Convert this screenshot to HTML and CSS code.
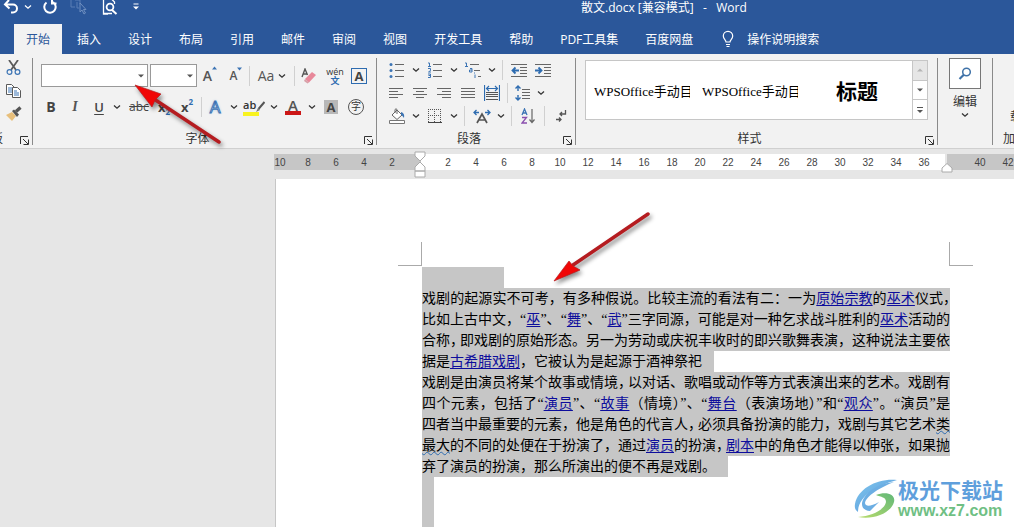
FILE: index.html
```html
<!DOCTYPE html>
<html lang="zh-CN">
<head>
<meta charset="utf-8">
<title>散文.docx - Word</title>
<link rel="stylesheet" href="styles.css">
</head>
<body>
<svg class="defs" aria-hidden="true">
  <symbol id="chev" viewBox="0 0 8 6"><path d="M1 1.500 4 4.200 7 1.500" fill="none" stroke="currentColor" stroke-width="1.300"/></symbol>
  <symbol id="tri" viewBox="0 0 8 6"><path d="M1 1.500h6L4 4.500z" fill="currentColor"/></symbol>
  <symbol id="launch" viewBox="0 0 9 9"><path d="M.5 8V.5H8M3 3l5 5M8.500 3.500v5h-5" fill="none" stroke="#333" stroke-width="1"/></symbol>
</svg>
<div class="app">
  <header class="titlebar">
    <div class="quick">
      <button class="q q-undo" aria-label="撤消"><svg width="16" height="16" viewBox="0 0 16 16"><path d="M6 1 2 5.500 6.500 9.500M2.500 5.500H10a4 4 0 0 1 0 8H8" fill="none" stroke="#fff" stroke-width="2"/></svg></button>
      <button class="q q-small" aria-label="撤消列表"><svg width="8" height="6"><use href="#chev"/></svg></button>
      <button class="q q-redo" aria-label="重复"><svg width="16" height="16" viewBox="0 0 16 16"><path d="M4.500 3.500a5.700 5.700 0 1 0 6.500-.3M10 0v4.500h4.500" fill="none" stroke="#fff" stroke-width="2"/></svg></button>
      <button class="q q-select" aria-label="选择"><svg width="18" height="16" viewBox="0 0 18 16"><path d="M1 1v7h4M5 1h5v4M7 3v6h2" fill="none" stroke="#5b7fb5"/><path d="M10 4v9l2-2 2 4 1.500-1-2-3.500H16z" fill="none" stroke="#6f8fc0"/></svg></button>
      <button class="q q-preview" aria-label="打印预览"><svg width="16" height="16" viewBox="0 0 16 16"><path d="M6 15H1.500V0h8l3 3v2M1.500 14.500H10" fill="none" stroke="#fff" stroke-width="1.300"/><circle cx="8" cy="8" r="3.400" fill="none" stroke="#fff" stroke-width="1.800"/><path d="m10 11 4.500 4" stroke="#fff" stroke-width="2"/></svg></button>
      <button class="q q-more" aria-label="自定义"><svg width="8" height="8" viewBox="0 0 8 8"><path d="M1.500 1h5" stroke="#fff"/><path d="M1 3.500h6L4 6.500z" fill="#fff"/></svg></button>
    </div>
    <div class="doc-title">散文.docx [兼容模式] &nbsp; - &nbsp; Word</div>
  </header>
  <nav class="tabs">
    <button class="tab active">开始</button><button class="tab">插入</button><button class="tab">设计</button><button class="tab">布局</button><button class="tab">引用</button><button class="tab">邮件</button><button class="tab">审阅</button><button class="tab">视图</button><button class="tab">开发工具</button><button class="tab">帮助</button><button class="tab">PDF工具集</button><button class="tab">百度网盘</button>
    <button class="tell"><svg width="12" height="18" viewBox="0 0 12 18"><path d="M4 12c0-2-2.700-3-2.700-6a4.700 4.700 0 0 1 9.400 0c0 3-2.700 4-2.700 6zM4 14.500h4M4.500 16.500h3" fill="none" stroke="#fff" stroke-width="1.200"/></svg>操作说明搜索</button>
  </nav>

  <section class="ribbon">
    <div class="group g-clip">
      <div class="stack">
        <button class="b" aria-label="剪切"><svg width="16" height="16" viewBox="0 0 16 16"><path d="M3 0 10 10M12 0 5 10" stroke="#5a5a5a" stroke-width="1.800"/><circle cx="3.500" cy="12" r="2.400" fill="none" stroke="#3c74b4" stroke-width="1.200"/><circle cx="11.500" cy="12" r="2.400" fill="none" stroke="#3c74b4" stroke-width="1.200"/></svg></button>
        <button class="b" aria-label="复制"><svg width="16" height="16" viewBox="0 0 16 16"><path d="M.5 1.500h5l3 3v7h-8z" fill="#fff" stroke="#5a5a5a"/><path d="M2 5h4M2 7h4M2 9h4" stroke="#3c74b4"/><path d="M6.500 4.500h5l3 3v7h-8z" fill="#fff" stroke="#5a5a5a"/><path d="M8 8h3M8 10h5M8 12h5" stroke="#3c74b4"/></svg></button>
        <button class="b" aria-label="格式刷"><svg width="16" height="16" viewBox="0 0 16 16"><path d="m0 9 6-3 4 4-4 5z" fill="#e8bf7b"/><path d="m6 5 2-1.500 5 5L11 11z" fill="#555"/><path d="m10 5.500 4.500-4" stroke="#555" stroke-width="3.200"/></svg></button>
      </div>
      <div class="foot"><span class="clip-label">剪贴板</span><button class="launch" aria-label="剪贴板设置"><svg width="9" height="9"><use href="#launch"/></svg></button></div>
    </div>

    <div class="group g-font">
      <div class="rows two">
        <div class="row">
          <label class="combo combo-font"><select aria-label="字体"><option></option></select><svg width="8" height="6"><use href="#tri"/></svg></label>
          <label class="combo combo-size"><select aria-label="字号"><option></option></select><svg width="8" height="6"><use href="#tri"/></svg></label>
          <button class="b w26 ic" aria-label="增大字号"><span class="letter">A</span><svg class="up" width="5" height="4" viewBox="0 0 5 4"><path d="M0 3.500h5L2.500.5z" fill="#3c74b4"/></svg></button>
          <button class="b w26 ic" aria-label="减小字号"><span class="letter small">A</span><svg class="up" width="5" height="4" viewBox="0 0 5 4"><path d="M0 .5h5L2.500 3.500z" fill="#3c74b4"/></svg></button>
          <i class="sep"></i>
          <button class="b w44 aa">Aa<svg width="8" height="6"><use href="#chev"/></svg></button>
          <i class="sep"></i>
          <button class="b w28" aria-label="清除格式"><svg width="16" height="16" viewBox="0 0 16 16"><path d="m1 9 3-8 2.500 6M2 6h4" fill="none" stroke="#555" stroke-width="1.400"/><path d="m4 11 7-7 4 3-7 7.500z" fill="#e8889a"/><path d="m4 11 4 3.500-1.500 1L3 13z" fill="#d8a0a8"/></svg></button>
          <button class="b w24 wen"><span>wén</span><span class="blue">文</span></button>
          <button class="b w24"><span class="boxed">A</span></button>
        </div>
        <div class="row">
          <button class="b w24 bold">B</button>
          <button class="b w24 ital">I</button>
          <button class="b w24 under">U</button>
          <button class="b w12" aria-label="下划线样式"><svg width="8" height="6"><use href="#chev"/></svg></button>
          <button class="b w32 strike">abc</button>
          <button class="b w18 script">x<sub>2</sub></button>
          <button class="b w28 script">x<sup>2</sup></button>
          <i class="sep"></i>
          <button class="b w26 effect">A</button>
          <button class="b w12" aria-label="文本效果"><svg width="8" height="6"><use href="#chev"/></svg></button>
          <button class="b w28 mark"><span>ab</span><svg width="10" height="12" viewBox="0 0 10 12"><path d="m9.500 1-6 7" stroke="#555" stroke-width="2"/><path d="M3 7 1 11l4-2z" fill="#777"/></svg></button>
          <button class="b w12" aria-label="突出显示颜色"><svg width="8" height="6"><use href="#chev"/></svg></button>
          <button class="b w26 color">A</button>
          <button class="b w12" aria-label="字体颜色"><svg width="8" height="6"><use href="#chev"/></svg></button>
          <button class="b w26"><span class="shade">A</span></button>
          <button class="b w24"><span class="ring">字</span></button>
        </div>
      </div>
      <div class="foot"><span class="label">字体</span><button class="launch" aria-label="字体设置"><svg width="9" height="9"><use href="#launch"/></svg></button></div>
    </div>

    <div class="group g-para">
      <div class="rows three">
        <div class="row">
          <button class="b w26" aria-label="项目符号"><svg width="16" height="16" viewBox="0 0 16 16"><path d="M6 2.500h9M6 8.500h9M6 14.500h9" stroke="#666"/><g fill="#3c74b4"><circle cx="2" cy="2.500" r="1.500"/><circle cx="2" cy="8.500" r="1.500"/><circle cx="2" cy="14.500" r="1.500"/></g></svg></button>
          <button class="b w12" aria-label="项目符号库"><svg width="8" height="6"><use href="#chev"/></svg></button>
          <button class="b w26" aria-label="编号"><svg width="16" height="16" viewBox="0 0 16 16"><path d="M6 2.500h9M6 8.500h9M6 14.500h9" stroke="#666"/><path d="M1 1h1.500v3.500M1 4.500h3M1 6.500h2.500v2L1.500 10H4M1 12h2.500v3.500H1M1.500 13.500h2" fill="none" stroke="#3c74b4"/></svg></button>
          <button class="b w12" aria-label="编号库"><svg width="8" height="6"><use href="#chev"/></svg></button>
          <button class="b w26" aria-label="多级列表"><svg width="16" height="16" viewBox="0 0 16 16"><path d="M5 2.500h9M9 8.500h6M13 14.500h3" stroke="#666"/><path d="M0 1h1.500v3.500M0 4.500h3M5 6.500h2v3.500H4.500V8H7M9.500 10.500v1M10 12.500v3.500" fill="none" stroke="#3c74b4"/></svg></button>
          <button class="b w12" aria-label="列表库"><svg width="8" height="6"><use href="#chev"/></svg></button>
          <i class="sep wide"></i>
          <button class="b w24" aria-label="减少缩进"><svg width="16" height="16" viewBox="0 0 16 16"><path d="M0 2.500h16M9 5.500h7M9 8.500h7M9 11.500h7M0 14.500h16" stroke="#666"/><path d="M8 8.500H2M4.500 5.500l-3 3 3 3" fill="none" stroke="#2e6cb0" stroke-width="1.800"/></svg></button>
          <button class="b w24" aria-label="增加缩进"><svg width="16" height="16" viewBox="0 0 16 16"><path d="M0 2.500h16M9 5.500h7M9 8.500h7M9 11.500h7M0 14.500h16" stroke="#666"/><path d="M0 8.500h6M3.500 5.500l3 3-3 3" fill="none" stroke="#2e6cb0" stroke-width="1.800"/></svg></button>
        </div>
        <div class="row">
          <button class="b w24" aria-label="左对齐"><svg width="16" height="14" viewBox="0 0 16 14"><path d="M1 2.500h14M1 5.500h9M1 8.500h14M1 11.500h9" stroke="#666"/></svg></button>
          <button class="b w24" aria-label="居中"><svg width="16" height="14" viewBox="0 0 16 14"><path d="M1 2.500h14M4 5.500h8M1 8.500h14M4 11.500h8" stroke="#666"/></svg></button>
          <button class="b w24" aria-label="右对齐"><svg width="16" height="14" viewBox="0 0 16 14"><path d="M1 2.500h14M6 5.500h9M1 8.500h14M6 11.500h9" stroke="#666"/></svg></button>
          <button class="b w24" aria-label="两端对齐"><svg width="16" height="14" viewBox="0 0 16 14"><path d="M1 2.500h14M1 5.500h14M1 8.500h14M1 11.500h14" stroke="#666"/></svg></button>
          <button class="b w24" aria-label="分散对齐"><svg width="16" height="16" viewBox="0 0 16 16"><path d="M.5 0v16M15.500 0v16M3 3.500h10M5 1 2.500 3.500 5 6M11 1l2.500 2.500L11 6" fill="none" stroke="#2e6cb0" stroke-width="1.200"/><path d="M2 7.500h12M2 9.500h12M2 11.500h12M2 14.500h12" stroke="#555"/></svg></button>
          <i class="sep tight"></i>
          <button class="b w24" aria-label="行距"><svg width="16" height="16" viewBox="0 0 16 16"><path d="M7 4.500h8M7 7.500h8M7 10.500h8M7 13.500h8" stroke="#666"/><path d="M3 1v5M3 10v5M.5 3.500 3 1l2.500 2.500M.5 12.500 3 15l2.500-2.500" fill="none" stroke="#2e6cb0" stroke-width="1.400"/></svg></button>
          <button class="b w12" aria-label="行距选项"><svg width="8" height="6"><use href="#chev"/></svg></button>
        </div>
        <div class="row">
          <button class="b w26" aria-label="底纹"><svg width="16" height="16" viewBox="0 0 16 16"><path d="m3 7 5-5 5 5-5 4.500zM6 5V1.500Q7 0 8 1.500V6" fill="#fff" stroke="#666"/><path d="M12 4q4 1 3 6-2-3-3-3z" fill="#3c74b4"/><path d="M.5 12.500h15v3H.5z" fill="#fff" stroke="#777"/></svg></button>
          <button class="b w12" aria-label="底纹颜色"><svg width="8" height="6"><use href="#chev"/></svg></button>
          <button class="b w26" aria-label="边框"><svg width="14" height="14" viewBox="0 0 14 14"><path d="M.5 0v13M6.500 0v13M12.500 0v13M0 .5h13M0 6.500h13" stroke="#555" stroke-dasharray="1 1"/><path d="M0 13.500h14" stroke="#444"/></svg></button>
          <button class="b w12" aria-label="边框样式"><svg width="8" height="6"><use href="#chev"/></svg></button>
          <i class="sep wide"></i>
          <button class="b w26" aria-label="中文版式"><svg width="18" height="16" viewBox="0 0 18 16"><path d="m4 15 5-9 5 9M6 12h6" fill="none" stroke="#555" stroke-width="1.700"/><path d="M1 4.500h5M3.500 2 1 4.500 3.500 7M12 4.500h5M14.500 2 17 4.500 14.500 7" fill="none" stroke="#2e6cb0" stroke-width="1.300"/></svg></button>
          <button class="b w12" aria-label="版式选项"><svg width="8" height="6"><use href="#chev"/></svg></button>
          <i class="sep wide"></i>
          <button class="b w24" aria-label="排序"><svg width="14" height="16" viewBox="0 0 14 16"><path d="m1 7 2.500-6L6 7M2 5h3" fill="none" stroke="#3c74b4" stroke-width="1.300"/><path d="M1 9.500h4.500L1 15h5" fill="none" stroke="#8a4fae" stroke-width="1.300"/><path d="M11 1v13M8.500 11.500 11 14.500l2.500-3" fill="none" stroke="#666" stroke-width="1.200"/></svg></button>
          <i class="sep wide"></i>
          <button class="b w24" aria-label="显示编辑标记"><svg width="12" height="14" viewBox="0 0 12 14"><path d="M10.500 1v4H5M7 3 5 5l2 2M1 10.500h5M4 8.500l2 2-2 2" fill="none" stroke="#555" stroke-width="1.300"/></svg></button>
        </div>
      </div>
      <div class="foot"><span class="label">段落</span><button class="launch" aria-label="段落设置"><svg width="9" height="9"><use href="#launch"/></svg></button></div>
    </div>

    <div class="group g-style">
      <div class="gallery">
        <button class="style">WPSOffice手动目录</button>
        <button class="style">WPSOffice手动目录</button>
        <button class="style heading">标题</button>
        <div class="scroll">
          <button class="off" aria-label="上一行"><svg width="8" height="6" viewBox="0 0 8 6"><path d="M1 4.500h6L4 1.500z" fill="#b5b5b5"/></svg></button>
          <button aria-label="下一行"><svg width="8" height="6"><use href="#tri"/></svg></button>
          <button aria-label="其他"><svg width="8" height="8" viewBox="0 0 8 8"><path d="M1 1.500h6" stroke="#555"/><path d="M1 4h6L4 7z" fill="#555"/></svg></button>
        </div>
      </div>
      <div class="foot"><span class="label">样式</span><button class="launch" aria-label="样式设置"><svg width="9" height="9"><use href="#launch"/></svg></button></div>
    </div>

    <div class="group g-edit">
      <button class="edit"><span class="edit-box"><svg width="14" height="14" viewBox="0 0 14 14"><circle cx="8.500" cy="5" r="3.800" fill="none" stroke="#3f72a8" stroke-width="1.500"/><path d="M5.800 7.800 1.500 12" stroke="#3f72a8" stroke-width="2.200"/></svg></span><span>编辑</span><svg width="8" height="6"><use href="#chev"/></svg></button>
    </div>
    <div class="group g-addin"><button class="addin">载项</button><div class="foot addin-foot">加载项</div></div>
  </section>

  <main class="workspace">
    <div class="ruler">
      <div class="r-left"><span>10</span><span>8</span><span>6</span><span>4</span><span>2</span></div>
      <div class="r-mid"><span>2</span><span>4</span><span>6</span><span>8</span><span>10</span><span>12</span><span>14</span><span>16</span><span>18</span><span>20</span><span>22</span><span>24</span><span>26</span><span>28</span><span>30</span><span>32</span><span>34</span><span>36</span>
        <svg class="indent-left" width="12" height="28" viewBox="0 0 12 28"><path d="M1 1h10v4L6 10 1 5zM1 20v-4l5-5 5 5v4zM1 20h10v6H1z" fill="#fff" stroke="#aaa"/></svg>
        <svg class="indent-right" width="12" height="10" viewBox="0 0 12 10"><path d="M1 9V5l5-4.500L11 5v4z" fill="#fff" stroke="#aaa"/></svg>
      </div>
      <div class="r-right"><span>40</span><span>42</span></div>
    </div>
    <article class="page">
      <div class="corners"><i class="corner c-left"></i><i class="corner c-right"></i></div>
      <div class="sel sel-blank"></div>
      <p class="para">
        <span class="line full">戏剧的起源实不可考，有多种假说。比较主流的看法有二：一为<a href="#">原始宗教</a>的<a href="#">巫术</a>仪式<span class="half">，</span></span>
        <span class="line full">比如上古中文，“<a href="#">巫</a>”、“<a href="#">舞</a>”、“<a href="#">武</a>”三字同源，可能是对一种乞求战斗胜利的<a href="#">巫术</a>活动的</span>
        <span class="line full">合称<span class="tuck">，</span>即戏剧的原始形态。另一为劳动或庆祝丰收时的即兴歌舞表演，这种说法主要依</span>
        <span class="line last">据是<a href="#">古希腊戏剧</a>，它被认为是起源于酒神祭祀</span>
      </p>
      <p class="para">
        <span class="line full">戏剧是由演员将某个故事或情境<span class="tuck">，</span>以对话、歌唱或动作等方式表演出来的艺术。戏剧有</span>
        <span class="line full">四个元素，包括了“<a href="#">演员</a>”、“<a href="#">故事</a>（情境）”、“<a href="#">舞台</a>（表演场地）”和“<a href="#">观众</a>”。“演员”是</span>
        <span class="line full">四者当中最重要的元素，他是角色的代言人<span class="tuck">，</span>必须具备扮演的能力，戏剧与其它艺术<span class="wavy">类</span></span>
        <span class="line full"><span class="wavy">最大</span>的不同的处便在于扮演了，通过<a href="#">演员</a>的扮演<span class="tuck">，</span><a href="#">剧本</a>中的角色才能得以伸张，如果抛</span>
        <span class="line last">弃了演员的扮演，那么所演出的便不再是戏剧。</span>
      </p>
      <div class="sel sel-tail"></div>
    </article>
  </main>

  <svg class="arrow arrow-ribbon" width="100" height="70" viewBox="0 0 100 70"><path d="m24 19 65 43" stroke="#b51c20" stroke-width="3.500" stroke-linecap="round"/><path d="M5 5 31 14 25 20 22 27z" fill="#f00606" stroke="#b51c20" stroke-width=".7"/></svg>
  <svg class="arrow arrow-text" width="110" height="80" viewBox="0 0 110 80"><path d="M99 6 24 57" stroke="#b51c20" stroke-width="3.500" stroke-linecap="round"/><path d="M5 73 20 53 24 58 31 62z" fill="#f00606" stroke="#b51c20" stroke-width=".7"/></svg>

  <div class="watermark">
    <svg width="44" height="40" viewBox="0 0 44 40"><defs><linearGradient id="wa" x2="1" y2="1"><stop stop-color="#7fc8ee"/><stop offset="1" stop-color="#5793d8"/></linearGradient><linearGradient id="wb" x1="1" x2="0" y2="1"><stop stop-color="#62b878"/><stop offset="1" stop-color="#b9dc6c"/></linearGradient></defs><path d="M43 1C24-1 4 9 1 25q-1 6 3 8C4 18 21 7 43 1z" fill="url(#wa)"/><path d="M40 3C27 8 12 17 11 24q1 6 14-1l-9 9C5 31 6 21 15 13 23 6 32 4 40 3z" fill="#6caee3"/><path d="M22 16c10-4 20-1 18 7C37 34 20 41 4 38c15-1 27-8 28-15 0-5-5-5-10-7z" fill="url(#wb)"/></svg>
    <div><div class="wm-name">极光下载站</div><div class="wm-url">www.xz7.com</div></div>
  </div>
</div>
</body>
</html>
```
FILE: styles.css
```css
* { box-sizing: border-box; }
body { margin: 0; font-family: "Liberation Sans", "Noto Sans CJK SC", sans-serif; font-size: 12px; color: #333; }
button { border: 0; padding: 0; margin: 0; background: none; font: inherit; color: inherit; }
svg { flex: none; }
.defs { position: absolute; width: 0; height: 0; }
.app { position: relative; display: flex; flex-direction: column; height: 100vh; overflow: hidden; background: #e6e6e6; }

.titlebar { display: flex; align-items: center; height: 24px; padding-bottom: 10px; background: #2b579a; color: #fff; flex: none; }
.quick { display: flex; align-items: center; width: 581px; padding-left: 3px; }
.q { display: flex; align-items: center; }
.q-undo { width: 21px; }
.q-small { width: 18px; }
.q-redo { width: 28px; }
.q-select { width: 32px; }
.q-preview { width: 30px; }
.doc-title { font-family: "Open Sans", "Noto Sans CJK SC", sans-serif; white-space: nowrap; }

.tabs { display: flex; gap: 3px; height: 30px; padding-left: 14px; background: #2b579a; color: #fff; flex: none; font-family: "Open Sans", "Noto Sans CJK SC", sans-serif; }
.tab { padding: 0 12px; white-space: nowrap; }
.tab.active { background: #f2f2f2; color: #2b579a; }
.tell { display: flex; align-items: center; gap: 13px; padding-left: 14px; white-space: nowrap; }

.ribbon { display: flex; height: 95px; background: #f2f2f2; border-bottom: 1px solid #d0d0d0; flex: none; overflow: hidden; padding-top: 4px; }
.group { display: flex; flex-direction: column; height: 87px; border-right: 1px solid #8a8a8a; flex: none; }
.g-clip { width: 33px; }
.g-font { width: 344px; }
.g-para { width: 199px; }
.g-style { width: 362px; }
.g-edit { width: 55px; }
.g-addin { flex: 1; border: 0; overflow: hidden; }
.foot { display: flex; align-items: center; height: 16px; margin-top: auto; padding-right: 1px; white-space: nowrap; }
.label { flex: 1; text-align: center; }
.launch { display: flex; width: 13px; height: 9px; align-self: flex-end; justify-content: center; }
.clip-label { display: flex; justify-content: flex-end; width: 3px; margin-right: auto; overflow: hidden; }

.stack { display: flex; flex-direction: column; gap: 7px; padding: 2px 0 0 6px; }
.rows { display: flex; flex-direction: column; }
.row { display: flex; align-items: center; }
.two .row { height: 31px; }
.two { padding: 2px 0 0 6px; }
.two .row:first-child { padding-left: 2px; }
.three { padding-left: 7px; }
.three .row { height: 23px; }
.b { display: flex; align-items: center; justify-content: center; flex: none; }
.stack .b { width: 16px; }
.w12 { width: 12px; }
.w18 { width: 18px; }
.w24 { width: 24px; }
.w26 { width: 26px; }
.w28 { width: 28px; }
.w32 { width: 32px; }
.w44 { width: 44px; }
.sep { width: 1px; height: 20px; background: #d0d0d0; flex: none; }
.sep.wide { margin: 0 4px; }
.sep.tight { margin: 0 3px; }

.combo { display: grid; align-items: center; height: 23px; }
.combo select { grid-area: 1 / 1; width: 100%; height: 23px; appearance: none; border: 1px solid #999; border-radius: 0; background: #fff; }
.combo svg { grid-area: 1 / 1; justify-self: end; margin-right: 3px; color: #555; pointer-events: none; }
.combo-font { width: 107px; margin-right: 2px; }
.combo-size { width: 47px; }
.letter { font: 600 14px "Open Sans", sans-serif; color: #555; }
.letter.small { font-size: 12px; }
.ic .up { align-self: flex-start; }
.aa { gap: 4px; font: 14px "Open Sans", sans-serif; color: #555; }
.aa svg, .w12 svg { color: #333; }
.wen { display: grid; justify-items: center; font-size: 9px; line-height: 9px; font-family: "Open Sans", "Noto Sans CJK SC", sans-serif; }
.wen span { height: 9px; }
.blue { color: #2e6cb0; font-weight: bold; }
.boxed { width: 16px; height: 16px; border: 1px solid #2e6cb0; font: bold 13px/14px "Open Sans", sans-serif; color: #444; }
.bold { font: bold 14px "Open Sans", sans-serif; color: #444; }
.ital { font: italic bold 14px "Liberation Serif", serif; color: #555; }
.under { font: 600 13px "Open Sans", sans-serif; color: #444; text-decoration: underline; text-underline-offset: 2px; }
.strike { font: 12px "Open Sans", sans-serif; text-decoration: line-through; color: #444; }
.script { font: bold 13px "Open Sans", sans-serif; color: #444; }
.script sub, .script sup { font-size: 8px; line-height: 8px; color: #2e6cb0; }
.script sup { align-self: flex-start; }
.script sub { align-self: flex-end; }
.effect { font: 17px "Open Sans", sans-serif; color: #fff; -webkit-text-stroke: 1px #3c74b4; text-shadow: 0 0 3px #8fb8e0; }
.mark span { width: 16px; text-align: left; font: 600 11px/14px "Open Sans", sans-serif; border-bottom: 4px solid #f8f320; }
.mark svg { margin-left: -4px; }
.color { height: 17px; padding-bottom: 4px; font: 600 15px/12px "Open Sans", sans-serif; color: #555; background: linear-gradient(#cc1717, #cc1717) bottom / 16px 4px no-repeat; }
.shade { width: 14px; height: 14px; background: #b8b8b8; font: bold 13px/14px "Open Sans", sans-serif; color: #444; }
.ring { width: 16px; height: 16px; border: 1px solid #555; border-radius: 50%; font-size: 10px; line-height: 14px; }

.gallery { display: flex; height: 60px; margin: 2px 9px 0; border: 1px solid #c6c6c6; background: #fff; padding-left: 8px; gap: 12px; }
.style { width: 96px; flex: none; overflow: hidden; white-space: nowrap; text-align: left; font-family: "Liberation Serif", "Noto Sans CJK SC", serif; font-size: 13px; color: #000; }
.style.heading { width: 90px; padding-left: 4px; font-size: 21px; font-weight: bold; text-align: center; }
.scroll { display: flex; flex-direction: column; width: 15px; margin-left: auto; border-left: 1px solid #c6c6c6; }
.scroll button { flex: 1; display: flex; align-items: center; justify-content: center; color: #555; }
.scroll button + button { border-top: 1px solid #c6c6c6; }
.scroll .off { background: #e6e6e6; }
.edit { display: flex; flex-direction: column; align-items: center; gap: 3px; }
.edit-box { display: flex; align-items: center; justify-content: center; width: 32px; height: 31px; border: 1px solid #777; background: #fff; }
.addin { margin: 49px 0 0 17px; white-space: nowrap; text-align: left; }
.addin-foot { padding-left: 10px; }

.workspace { display: flex; flex-direction: column; flex: 1; padding-top: 5px; min-height: 0; }
.ruler { display: flex; height: 16px; margin: 0 0 9px 274px; font-size: 10px; line-height: 17px; color: #444; flex: none; }
.ruler span { width: 28px; text-align: center; flex: none; }
.r-left { display: flex; justify-content: flex-end; width: 147px; padding-right: 15px; background: #c6c6c6; flex: none; }
.r-mid { position: relative; display: flex; width: 524px; padding-left: 13px; margin-right: 2px; background: #fff; flex: none; }
.r-right { display: flex; flex: 1; padding-left: 19px; background: #c6c6c6; overflow: hidden; }
.indent-left { position: absolute; left: -7px; top: -3px; }
.indent-right { position: absolute; right: -8px; top: 9px; }
.page { display: flex; flex-direction: column; flex: 1; margin-left: 275px; padding: 63px 0 0 146px; background: #fff; border-left: 1px solid #c6c6c6; overflow: hidden; }
.corners { display: flex; justify-content: space-between; width: 575px; margin: 0 0 1px -24px; flex: none; }
.corner { width: 24px; height: 24px; border-bottom: 1px solid #aaa; }
.c-left { border-right: 1px solid #aaa; }
.c-right { border-left: 1px solid #aaa; }
.sel { background: #c6c6c6; }
.sel-blank { width: 82px; height: 21px; flex: none; }
.sel-tail { width: 12px; flex: 1; }
.para { margin: 0; font-family: "Liberation Serif", "Noto Sans CJK SC", serif; font-size: 14px; line-height: 21px; color: #000; flex: none; }
.line { display: block; height: 21px; width: 528px; white-space: nowrap; background: #c6c6c6; }
.full { text-align: justify; text-align-last: justify; white-space: normal; }
.last { width: fit-content; padding-right: 12px; }
.half { font-feature-settings: "halt"; }
.tuck { margin-right: -4px; }
.para a { color: #0d0d9c; text-decoration: underline; text-underline-offset: 2px; }
.wavy { text-decoration: underline wavy #2e6cb0 1px; }

.arrow { position: absolute; fill: none; filter: drop-shadow(2px 3px 2px rgba(0, 0, 0, .45)); pointer-events: none; }
.arrow-ribbon { left: 130px; top: 80px; }
.arrow-text { left: 549px; top: 208px; }
.watermark { position: absolute; right: 11px; bottom: 6px; display: flex; align-items: center; }
.wm-name { font: bold 21px/24px "Noto Sans CJK SC", sans-serif; color: #5f9fdc; }
.wm-url { font: bold 16px/20px "Liberation Sans", sans-serif; color: #6fbf84; }
```
